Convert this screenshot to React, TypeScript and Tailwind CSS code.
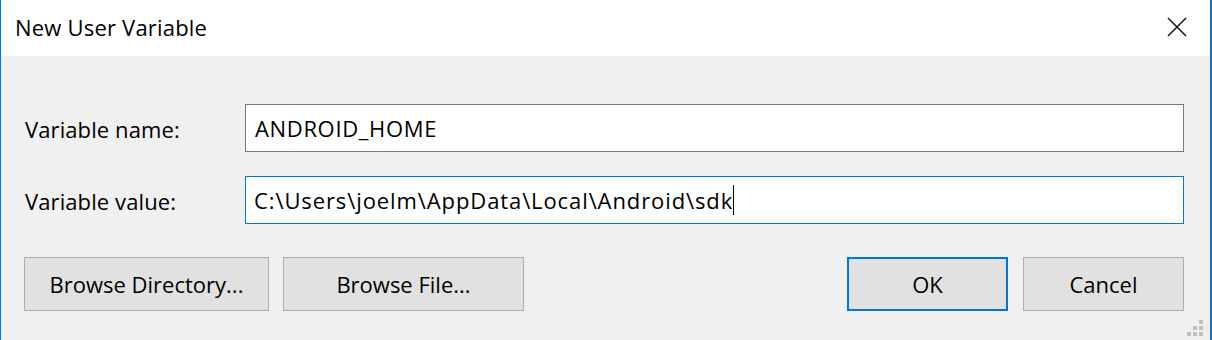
import React from "react";

const font = { fontFamily: '"Open Sans", "Noto Sans", sans-serif' };

function Grip() {
  const dots = [
    [12, 0],
    [6, 6],
    [12, 6],
    [0, 12],
    [6, 12],
    [12, 12],
  ];
  return (
    <div className="absolute right-[7px] bottom-[4px] w-[16px] h-[16px]">
      {dots.map(([x, y], i) => (
        <span
          key={i}
          className="absolute w-[4px] h-[4px] bg-[#bfbfbf]"
          style={{ left: x, top: y }}
        />
      ))}
    </div>
  );
}

function Button({ label, w, focused }: { label: string; w: string; focused?: boolean }) {
  return (
    <button
      className={`${w} h-[54px] bg-[#e1e1e1] text-[22px] text-black flex items-center justify-center ${
        focused ? "border-2 border-[#0078d7]" : "border border-[#adadad]"
      }`}
    >
      {label}
    </button>
  );
}

export default function App() {
  return (
    <div
      className="relative w-[1212px] h-[340px] bg-[#f0f0f0] border-l border-r-2 border-[#0078d7] flex flex-col text-black overflow-hidden"
      style={font}
    >
      <div className="h-[56px] bg-white flex items-center justify-between pl-[14px] pr-[23px] shrink-0">
        <span className="text-[22px] leading-none pb-[3px] tracking-[0.2px]">New User Variable</span>
        <svg width="20" height="20" viewBox="0 0 20 20" className="mt-[-2px]">
          <path d="M1 1 L19 19 M19 1 L1 19" stroke="#1a1a1a" strokeWidth="1.6" />
        </svg>
      </div>

      <div className="flex flex-col pt-[48px] pl-[24px] pr-[26px] gap-[24px]">
        <div className="flex items-center h-[48px]">
          <div className="w-[220px] text-[22px] pt-[2px] tracking-[0.1px]">Variable name:</div>
          <div className="flex-1 h-[48px] bg-white border border-[#7a7a7a] flex items-center pl-[9px] text-[22px] tracking-[0.65px]">
            ANDROID_HOME
          </div>
        </div>
        <div className="flex items-center h-[48px]">
          <div className="w-[220px] text-[22px] pt-[2px] tracking-[0.1px]">Variable value:</div>
          <div className="flex-1 h-[48px] bg-white border border-[#0078d7] flex items-center pl-[8px] text-[22px]">
            <span className="tracking-[0.9px]">C:\Users\joelm\AppData\Local\Android\sdk</span>
            <span className="w-px h-[30px] bg-black" />
          </div>
        </div>
      </div>

      <div className="flex items-center pl-[23px] pr-[26px] mt-[33px]">
        <Button label="Browse Directory..." w="w-[245px]" />
        <div className="w-[14px]" />
        <Button label="Browse File..." w="w-[241px]" />
        <div className="flex-1" />
        <Button label="OK" w="w-[161px]" focused />
        <div className="w-[15px]" />
        <Button label="Cancel" w="w-[161px]" />
      </div>

      <Grip />
    </div>
  );
}
